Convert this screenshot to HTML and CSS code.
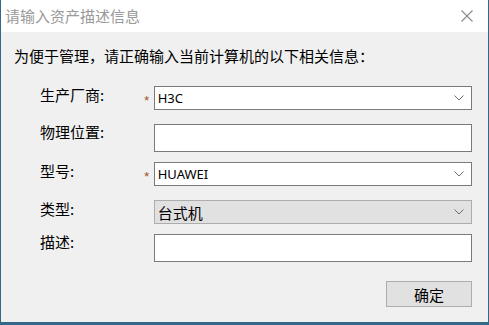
FILE: index.html
```html
<!DOCTYPE html>
<html lang="zh-CN">
<head>
    <meta charset="UTF-8">
    <meta name="viewport" content="width=device-width, initial-scale=1.0">
    <title>资产信息</title>
    <link rel="stylesheet" href="styles.css">
</head>
<body>
    <div class="win">
        <div class="titlebar">
            <span class="title">请输入资产描述信息</span>
            <svg class="close" width="12" height="12" viewBox="0 0 12 12">
                <path d="M0.5 0.5 L11.5 11.5 M11.5 0.5 L0.5 11.5" stroke="#8a8a8a" stroke-width="1.1" fill="none"/>
            </svg>
        </div>
        <div class="content">
            <p class="intro">为便于管理，请正确输入当前计算机的以下相关信息：</p>
            <div class="form">
                <div class="row r1">
                    <label class="lbl">生产厂商:</label>
                    <span class="star">*</span>
                    <div class="combo">
                        <span class="val">H3C</span>
                        <svg class="arrow" width="10" height="6" viewBox="0 0 10 6"><path d="M0.5 0.5 L5 5 L9.5 0.5" stroke="#6d6d6d" fill="none"/></svg>
                    </div>
                </div>
                <div class="row r2">
                    <label class="lbl">物理位置:</label>
                    <span class="star"></span>
                    <div class="text"></div>
                </div>
                <div class="row r3">
                    <label class="lbl">型号:</label>
                    <span class="star">*</span>
                    <div class="combo">
                        <span class="val">HUAWEI</span>
                        <svg class="arrow" width="10" height="6" viewBox="0 0 10 6"><path d="M0.5 0.5 L5 5 L9.5 0.5" stroke="#6d6d6d" fill="none"/></svg>
                    </div>
                </div>
                <div class="row r4">
                    <label class="lbl">类型:</label>
                    <span class="star"></span>
                    <div class="combo locked">
                        <span class="val cn">台式机</span>
                        <svg class="arrow" width="10" height="6" viewBox="0 0 10 6"><path d="M0.5 0.5 L5 5 L9.5 0.5" stroke="#6d6d6d" fill="none"/></svg>
                    </div>
                </div>
                <div class="row r5">
                    <label class="lbl">描述:</label>
                    <span class="star"></span>
                    <div class="text"></div>
                </div>
            </div>
            <div class="actions">
                <button class="ok">确定</button>
            </div>
        </div>
    </div>
</body>
</html>
```

FILE: styles.css
```css
* , *::after , *::before{
    box-sizing: border-box;
    margin: 0;
    padding: 0;
}
html , body {
    width: 100%;
    height: 100%;
}
body{
    background-color: rgb(52, 104, 136);
    font-family: "Noto Sans CJK SC", sans-serif;
    overflow: hidden;
}
.win{
    width: 487px;
    height: 322px;
    margin-left: 1px;
    background-color: #f0f0f0;
    display: flex;
    flex-direction: column;
}
.titlebar{
    height: 32px;
    background-color: #ffffff;
    display: flex;
    align-items: center;
    justify-content: space-between;
    padding: 0 15px 0 4px;
}
.title{
    font-size: 15px;
    color: #9a9a9a;
    line-height: 20px;
}
.content{
    flex: 1;
    padding: 14px 16px 0 13px;
}
.intro{
    font-size: 15px;
    line-height: 20px;
    color: #000;
}
.form{
    display: flex;
    flex-direction: column;
    padding-left: 26px;
}
.row{
    display: flex;
    align-items: flex-start;
}
.r1{ margin-top: 20px; }
.r2{ margin-top: 14px; }
.r3{ margin-top: 10px; }
.r4{ margin-top: 14px; }
.r5{ margin-top: 10px; }
.lbl{
    width: 100px;
    height: 20px;
    font-size: 15px;
    line-height: 20px;
    margin-top: -1px;
    color: #000;
}
.r2 .lbl, .r5 .lbl{ margin-top: -2px; }
.star{
    width: 14px;
    height: 24px;
    font-family: "Liberation Mono", monospace;
    font-size: 13px;
    color: #a0522d;
    line-height: 32px;
    padding-left: 3px;
}
.combo, .text{
    width: 319px;
    border: 1px solid #7a7a7a;
    background-color: #ffffff;
}
.combo{
    height: 24px;
    display: flex;
    align-items: center;
    justify-content: space-between;
    padding: 0 7px 0 3px;
}
.text{
    height: 28px;
}
.val{
    font-family: "Noto Sans", sans-serif;
    font-size: 13px;
    color: #000;
}
.val.cn{
    font-family: "Noto Sans CJK SC", sans-serif;
    font-size: 15px;
}
.locked{
    background-color: #e1e1e1;
    border-color: #adadad;
}
.actions{
    display: flex;
    justify-content: flex-end;
    margin-top: 19px;
}
.ok{
    width: 86px;
    height: 26px;
    background-color: #e1e1e1;
    border: 1px solid #adadad;
    font-family: "Noto Sans CJK SC", sans-serif;
    font-size: 15px;
    color: #000;
}
```
